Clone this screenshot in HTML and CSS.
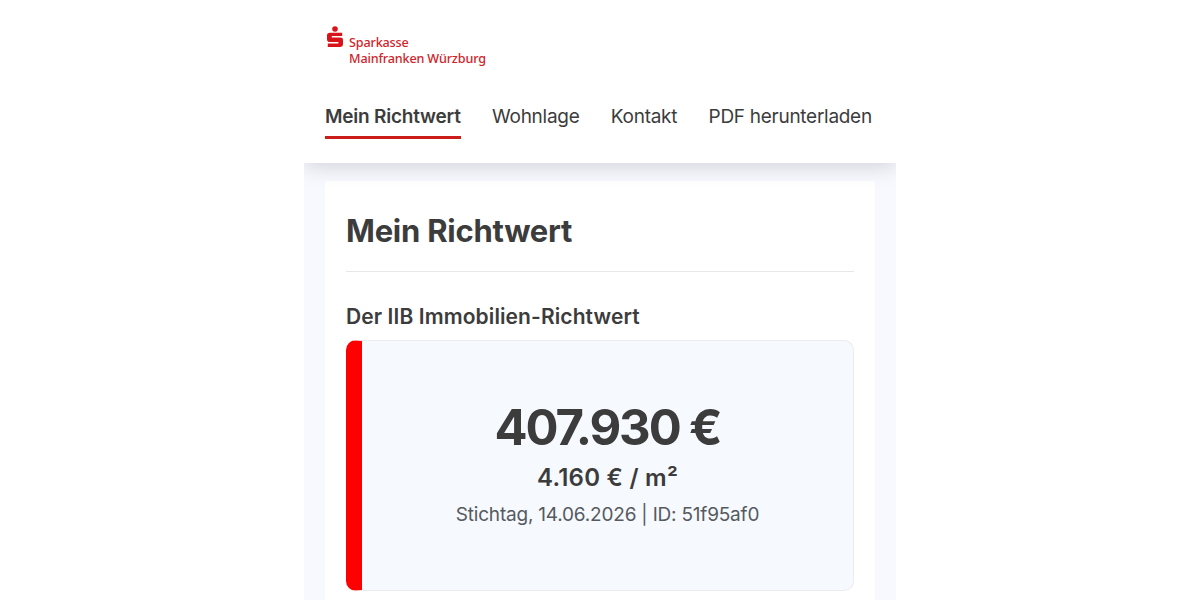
FILE: index.html
```html
<!DOCTYPE html>
<html lang="de">
<head>
  <meta charset="utf-8">
  <title>Mein Richtwert</title>
  <link rel="stylesheet" href="styles.css">
</head>
<body>
  <div class="page">
    <header class="header">
      <a class="logo" href="#">
        <svg class="logo-sign" viewBox="0 0 16 21" width="16" height="21">
          <circle cx="8" cy="3" r="2.8" fill="#d8141a"/>
          <path d="M3 6.8H15.2V10H4.8V11.6H13Q16 11.6 16 14V18Q16 21 13 21H0.8V17.6H11.4V16H3Q0 16 0 13.2V9.5Q0 6.8 3 6.8Z" fill="#d8141a"/>
        </svg>
        <span class="logo-text">Sparkasse<br>Mainfranken Würzburg</span>
      </a>
      <nav class="nav">
        <a class="nav-link active" href="#">Mein Richtwert</a>
        <a class="nav-link" href="#">Wohnlage</a>
        <a class="nav-link" href="#">Kontakt</a>
        <a class="nav-link" href="#">PDF herunterladen</a>
      </nav>
    </header>
    <main class="content">
      <h1>Mein Richtwert</h1>
      <h2>Der IIB Immobilien-Richtwert</h2>
      <div class="value-box">
        <div class="price">407.930 €</div>
        <div class="price-sqm">4.160 € / m²</div>
        <div class="info">Stichtag, 14.06.2026 | ID: 51f95af0</div>
      </div>
    </main>
  </div>
</body>
</html>
```

FILE: styles.css
```css
body {
  margin: 0;
  background: #fff;
  color: #3c3c3c;
  font-family: Inter, "Liberation Sans", sans-serif;
  overflow: hidden;
}

a {
  color: inherit;
  text-decoration: none;
}

.page {
  width: 592px;
  height: 600px;
  margin: 0 auto;
  background: #f7f9fe;
  overflow: hidden;
}

.header {
  position: relative;
  box-sizing: border-box;
  height: 163px;
  padding: 26px 21px 0;
  background: #fff;
  box-shadow: 0 4px 20px rgba(0, 0, 0, 0.15);
}

.logo {
  display: flex;
  gap: 6px;
  height: 41px;
  padding-left: 2px;
}

.logo-text {
  padding-top: 9px;
  color: #d0242b;
  font-family: "Noto Sans", sans-serif;
  font-size: 12.6px;
  font-weight: 500;
  letter-spacing: -0.15px;
  line-height: 16px;
  white-space: nowrap;
}

.nav {
  display: flex;
  gap: 31.4px;
  margin-top: 35px;
}

.nav-link {
  padding-bottom: 4px;
  border-bottom: 3px solid transparent;
  font-size: 19px;
  letter-spacing: -0.28px;
  line-height: 30px;
  white-space: nowrap;
}

.nav-link.active {
  border-color: #cb1d1a;
  font-weight: 600;
  letter-spacing: -0.22px;
}

.content {
  box-sizing: border-box;
  height: 440px;
  margin: 18px 21px 0;
  padding: 30px 21px 0;
  background: #fff;
}

h1 {
  margin: 0;
  padding-bottom: 20px;
  border-bottom: 1px solid #e8e8e8;
  font-size: 31px;
  font-weight: 700;
  letter-spacing: -0.25px;
  line-height: 40px;
}

h2 {
  margin: 30px 0 9px;
  font-size: 21px;
  font-weight: 600;
  letter-spacing: 0.1px;
  line-height: 29px;
}

.value-box {
  box-sizing: border-box;
  height: 251px;
  padding-top: 57px;
  border: 1px solid #ebecee;
  border-left: 16px solid #f00;
  border-radius: 10px;
  background: #f6f9fe;
  text-align: center;
}

.price {
  font-size: 49px;
  font-weight: 700;
  letter-spacing: -2.1px;
  line-height: 60px;
}

.price-sqm {
  font-size: 24px;
  font-weight: 600;
  letter-spacing: 0.25px;
  line-height: 39px;
}

.info {
  color: #555a5f;
  font-size: 19px;
  letter-spacing: -0.2px;
  line-height: 36px;
}
```
